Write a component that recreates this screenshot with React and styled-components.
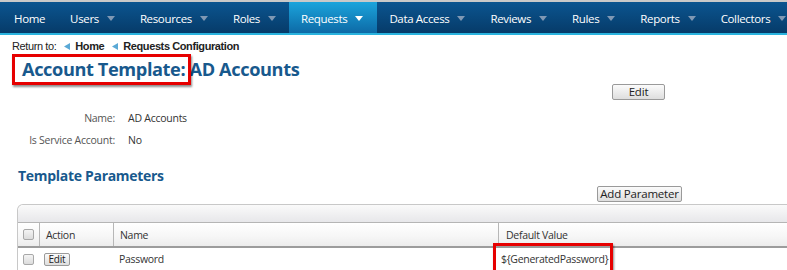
import React from "react";
import styled, { createGlobalStyle, css } from "styled-components";

const GlobalStyle = createGlobalStyle`
  html, body { margin: 0; padding: 0; background: #fff; overflow: hidden; }
  body { font-family: "Open Sans", "Liberation Sans", Arial, sans-serif; color: #333; }
`;

const Page = styled.div`
  width: 787px;
  height: 270px;
  overflow: hidden;
  border-top: 2px solid #c9c9c9;
  box-sizing: border-box;
`;

const Nav = styled.nav`
  display: flex;
  height: 31px;
  padding-left: 2px;
  background: linear-gradient(#0b5590, #063b69);
  border-bottom: 2px solid #2ab3de;
  white-space: nowrap;
`;

const NavItem = styled.div`
  display: flex;
  align-items: center;
  gap: 8px;
  padding: 1px 13px 0 12px;
  color: #fff;
  font-size: 11.5px;
  letter-spacing: -0.35px;
  ${(p) =>
    p.$active &&
    css`
      background: linear-gradient(#1ba4dc, #0d6aa6);
      padding-right: 14px;
    `}
`;

const Caret = ({ active }) => (
  <svg width="8" height="5" viewBox="0 0 8 5">
    <path d="M0 0 L8 0 L4 5 Z" fill={active ? "#ffffff" : "#7f98b4"} />
  </svg>
);

const Content = styled.div`
  padding-left: 12px;
`;

const Breadcrumb = styled.div`
  display: flex;
  align-items: center;
  gap: 6px;
  margin-top: 5px;
  height: 12px;
  font-family: "Liberation Sans", Arial, sans-serif;
  font-size: 11px;
  letter-spacing: -0.4px;
  color: #222;
`;

const Crumb = styled.span`
  display: inline-flex;
  align-items: center;
  gap: 5px;
  font-weight: bold;
  margin-left: 2px;
`;

const CrumbArrow = () => (
  <svg width="6" height="7" viewBox="0 0 6 7">
    <path d="M6 0 L6 7 L0 3.5 Z" fill="#5aa9d6" />
  </svg>
);

const Title = styled.h1`
  margin: 4px 0 0 10px;
  font-size: 18.2px;
  line-height: 26px;
  font-weight: 700;
  color: #18598d;
  letter-spacing: -0.4px;
`;

const Highlight = styled.span`
  position: relative;
  &::after {
    content: "";
    position: absolute;
    left: ${(p) => p.$l}px;
    right: ${(p) => p.$r}px;
    top: ${(p) => p.$t}px;
    bottom: ${(p) => p.$b}px;
    border: 3px solid #e60000;
    box-shadow: 1px 2px 2px rgba(0, 0, 0, 0.45);
    pointer-events: none;
  }
`;

const ButtonRow = styled.div`
  display: flex;
  justify-content: flex-end;
  width: ${(p) => p.$w}px;
  margin-top: ${(p) => p.$mt}px;
`;

const Button = styled.button`
  font-family: "Open Sans", "Liberation Sans", sans-serif;
  font-size: ${(p) => p.$fs || 11.5}px;
  letter-spacing: -0.2px;
  white-space: nowrap;
  color: #222;
  height: ${(p) => p.$h}px;
  width: ${(p) => p.$w}px;
  padding: 0;
  line-height: 1;
  border: 1px solid #9a9a9a;
  border-radius: 2px;
  background: linear-gradient(#fbfbfb, #dedede);
  cursor: pointer;
`;

const Details = styled.div`
  display: grid;
  grid-template-columns: 103px auto;
  column-gap: 13px;
  margin-top: 7px;
  font-size: 10.5px;
  letter-spacing: -0.25px;
`;

const Label = styled.div`
  text-align: right;
  color: #555;
  line-height: 22px;
`;

const Value = styled.div`
  color: #333;
  line-height: 22px;
`;

const SectionTitle = styled.h2`
  margin: 15px 0 0 6px;
  font-size: 14px;
  line-height: 20px;
  font-weight: 700;
  color: #18598d;
  letter-spacing: -0.3px;
`;

const TableWrap = styled.div`
  margin: 2px 0 0 5px;
  width: 900px;
  border: 1px solid #c8c8c8;
  border-bottom: none;
  border-radius: 6px 0 0 0;
`;

const Toolbar = styled.div`
  height: 17px;
  border-radius: 6px 0 0 0;
  background: linear-gradient(#fafafa, #e7e7ea);
  border-bottom: 1px solid #b5b5b5;
`;

const Row = styled.div`
  display: grid;
  grid-template-columns: 21px 74px 385px 1fr;
  height: ${(p) => p.$h}px;
  font-size: 10.5px;
  letter-spacing: -0.3px;
  ${(p) =>
    p.$header &&
    css`
      background: linear-gradient(#ffffff, #f6f6f6 60%, #ececec);
      border-bottom: 2px solid #9c9c9c;
    `}
`;

const Cell = styled.div`
  display: flex;
  align-items: center;
  padding-left: ${(p) => p.$pl ?? 6}px;
  color: #333;
  ${(p) => p.$sep && css`border-left: 1px solid #b7b7b7;`}
`;

const Check = styled.span`
  display: inline-block;
  width: 9px;
  height: 9px;
  border: 1px solid #a8a8a8;
  border-radius: 2px;
  background: linear-gradient(#f4f4f4, #dcdcdc);
`;

const navItems = [
  "Home",
  "Users",
  "Resources",
  "Roles",
  "Requests",
  "Data Access",
  "Reviews",
  "Rules",
  "Reports",
  "Collectors",
];

export default function App() {
  return (
    <>
      <GlobalStyle />
      <Page>
        <Nav>
          {navItems.map((n) => (
            <NavItem key={n} $active={n === "Requests"}>
              {n}
              {n !== "Home" && <Caret active={n === "Requests"} />}
            </NavItem>
          ))}
        </Nav>
        <Content>
          <Breadcrumb>
            <span>Return to:</span>
            <Crumb>
              <CrumbArrow />
              Home
            </Crumb>
            <Crumb>
              <CrumbArrow />
              Requests Configuration
            </Crumb>
          </Breadcrumb>
          <Title>
            <Highlight $l={-10} $r={-6} $t={-3} $b={-4}>
              Account Template:
            </Highlight>{" "}
            AD Accounts
          </Title>
          <ButtonRow $w={653} $mt={2}>
            <Button $w={53} $h={16}>Edit</Button>
          </ButtonRow>
          <Details>
            <Label>Name:</Label>
            <Value>AD Accounts</Value>
            <Label>Is Service Account:</Label>
            <Value>No</Value>
          </Details>
          <SectionTitle>Template Parameters</SectionTitle>
          <ButtonRow $w={670} $mt={0}>
            <Button $w={85} $h={16}>Add Parameter</Button>
          </ButtonRow>
          <TableWrap>
            <Toolbar />
            <Row $header $h={23}>
              <Cell $pl={5}>
                <Check />
              </Cell>
              <Cell $sep>Action</Cell>
              <Cell $sep>Name</Cell>
              <Cell $sep $pl={7}>Default Value</Cell>
            </Row>
            <Row $h={22}>
              <Cell $pl={5}>
                <Check />
              </Cell>
              <Cell $pl={5}>
                <Button $w={26} $h={13} $fs={10}>Edit</Button>
              </Cell>
              <Cell>Password</Cell>
              <Cell $pl={3}>
                <Highlight $l={-8} $r={-5} $t={-9} $b={-8}>
                  ${"{GeneratedPassword}"}
                </Highlight>
              </Cell>
            </Row>
          </TableWrap>
        </Content>
      </Page>
    </>
  );
}
